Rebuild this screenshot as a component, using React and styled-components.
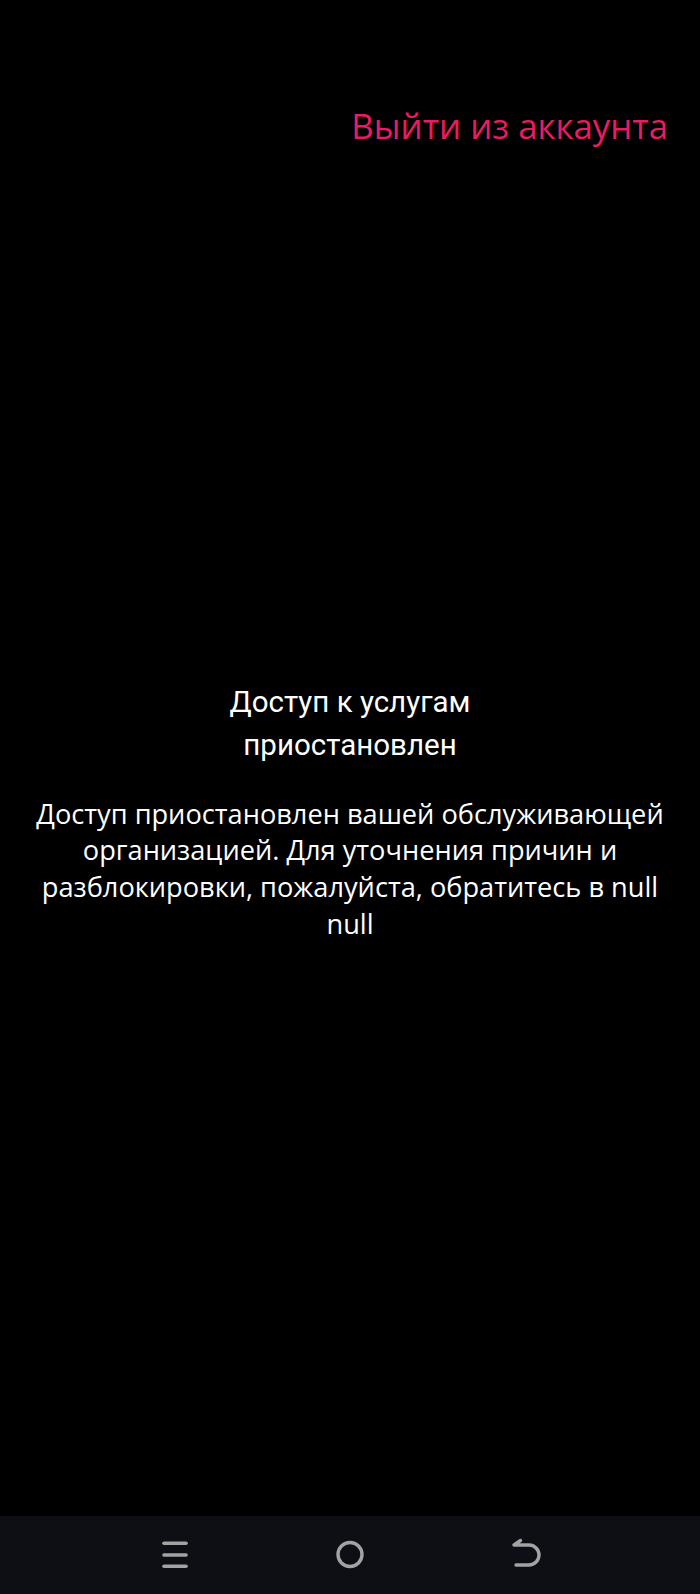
import React from 'react';
import styled, { createGlobalStyle } from 'styled-components';

const GlobalStyle = createGlobalStyle`
  html, body {
    margin: 0;
    padding: 0;
    background: #000;
  }
  #root {
    min-height: 100vh;
  }
`;

const Screen = styled.div`
  display: flex;
  flex-direction: column;
  height: 1594px;
  background: #000;
  font-family: 'Open Sans', 'Noto Sans', sans-serif;
`;

const Header = styled.header`
  display: flex;
  justify-content: flex-end;
  padding: 103px 32px 0 0;
`;

const LogoutButton = styled.button`
  background: none;
  border: none;
  padding: 0;
  margin: 0;
  cursor: pointer;
  font-family: 'Open Sans', 'Noto Sans', sans-serif;
  font-size: 34.8px;
  line-height: 46px;
  color: #e81c63;
`;

const Main = styled.main`
  flex: 1;
  display: flex;
  flex-direction: column;
  justify-content: center;
  align-items: center;
  padding: 0 30px 42px;
`;

const Title = styled.h1`
  margin: 0;
  font-family: 'Roboto', 'Noto Sans', sans-serif;
  font-weight: 400;
  font-size: 29.5px;
  line-height: 43px;
  color: #fff;
  text-align: center;
  max-width: 260px;
`;

const Message = styled.p`
  margin: 29px 0 0;
  font-size: 27.2px;
  line-height: 36.6px;
  color: #fff;
  text-align: center;
`;

const NavBar = styled.nav`
  height: 78px;
  background: #0e0f14;
  display: grid;
  grid-template-columns: repeat(3, 1fr);
  align-items: center;
  justify-items: center;
  padding: 0 87px;
`;

const NavIcon = styled.svg`
  width: 50px;
  height: 50px;
  display: block;
`;

const MenuIcon = () => (
  <NavIcon viewBox="0 0 50 50">
    <g stroke="#a3a3a3" strokeWidth="3.6" strokeLinecap="round">
      <line x1="14" y1="13.3" x2="36" y2="13.3" />
      <line x1="14" y1="25" x2="36" y2="25" />
      <line x1="14" y1="36.3" x2="36" y2="36.3" />
    </g>
  </NavIcon>
);

const HomeIcon = () => (
  <NavIcon viewBox="0 0 50 50">
    <circle cx="25" cy="24.5" r="12" fill="none" stroke="#a3a3a3" strokeWidth="3.4" />
  </NavIcon>
);

const BackIcon = () => (
  <NavIcon viewBox="0 0 50 50">
    <path
      d="M20.5 10.5 L14 15 H29 A10 10 0 0 1 29 35 H16"
      fill="none"
      stroke="#a3a3a3"
      strokeWidth="3.4"
      strokeLinecap="round"
      strokeLinejoin="round"
    />
  </NavIcon>
);

export default function App() {
  return (
    <>
      <GlobalStyle />
      <Screen>
        <Header>
          <LogoutButton>Выйти из аккаунта</LogoutButton>
        </Header>
        <Main>
          <Title>Доступ к услугам приостановлен</Title>
          <Message>
            Доступ приостановлен вашей обслуживающей организацией. Для уточнения
            причин и разблокировки, пожалуйста, обратитесь в null null
          </Message>
        </Main>
        <NavBar>
          <MenuIcon />
          <HomeIcon />
          <BackIcon />
        </NavBar>
      </Screen>
    </>
  );
}
